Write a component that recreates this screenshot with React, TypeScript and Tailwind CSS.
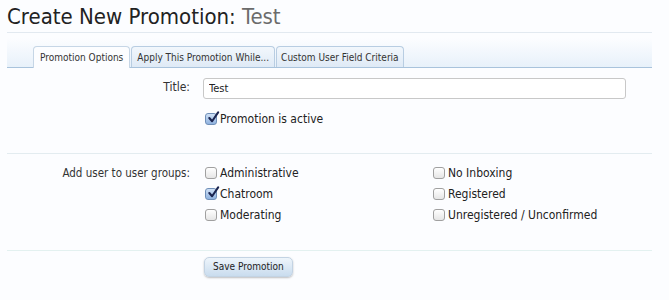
const groupsLeft = [
  { label: 'Administrative', checked: false },
  { label: 'Chatroom', checked: true },
  { label: 'Moderating', checked: false },
]

const groupsRight = [
  { label: 'No Inboxing', checked: false },
  { label: 'Registered', checked: false },
  { label: 'Unregistered / Unconfirmed', checked: false },
]

function Box({ checked }: { checked: boolean }) {
  return (
    <span
      className={
        checked
          ? 'relative inline-flex h-[12px] w-[12px] flex-shrink-0 items-center justify-center rounded-[3px] border border-[#6f8fb8] bg-gradient-to-b from-[#cfe0f5] to-[#8fb2df]'
          : 'relative inline-flex h-[12px] w-[12px] flex-shrink-0 items-center justify-center rounded-[3px] border border-[#a0a0a0] bg-gradient-to-b from-white to-[#e6e6e6]'
      }
    >
      {checked && (
        <svg className="absolute -top-[3px] left-[1px] h-[13px] w-[13px]" viewBox="0 0 14 14" aria-hidden="true">
          <path d="M2.5 7.5l3 3.5L12 1.5" fill="none" stroke="#1a2450" strokeWidth={2.2} strokeLinecap="round" strokeLinejoin="round" />
        </svg>
      )}
    </span>
  )
}

function Check({ label, checked }: { label: string; checked: boolean }) {
  return (
    <label className="flex h-[21px] items-center gap-[3px] text-[12px] text-[#222]">
      <Box checked={checked} />
      <span>{label}</span>
    </label>
  )
}

export default function App() {
  return (
    <div
      className="h-[300px] w-[669px] overflow-hidden bg-[#fcfdff] pl-[7px] pr-[17px]"
      style={{ fontFamily: '"DejaVu Sans Condensed", "DejaVu Sans", sans-serif' }}
    >
      <h1 className="pt-[4px] text-[22px] leading-[25px] text-[#222]">
        Create New Promotion: <span className="text-[#6b6b6b]">Test</span>
      </h1>
      <div className="mt-[3px] border-t border-[#e2e9f0]" />

      <div className="mt-[5px] flex h-[30px] items-end border-b border-[#a9c3dc] bg-gradient-to-b from-[#fcfdff] to-[#e8f1fa] pl-[26px]">
        <div className="-mb-px flex h-[22px] items-center rounded-t-[4px] border border-b-0 border-[#c6d6e6] bg-[#fcfdff] px-[6px] text-[10px] text-[#333]">
          Promotion Options
        </div>
        <div className="ml-px flex h-[21px] items-center rounded-t-[4px] border border-b-0 border-[#b8cde2] bg-gradient-to-b from-[#f2f7fc] to-[#dfeaf6] px-[5px] text-[10px] text-[#333]">
          Apply This Promotion While...
        </div>
        <div className="ml-px flex h-[21px] items-center rounded-t-[4px] border border-b-0 border-[#b8cde2] bg-gradient-to-b from-[#f2f7fc] to-[#dfeaf6] px-[4px] text-[10px] text-[#333]">
          Custom User Field Criteria
        </div>
      </div>

      <div className="grid grid-cols-[183px_1fr] gap-x-[13px] pt-[7px]">
        <div className="pt-[3px] text-right text-[12px] text-[#333]">Title:</div>
        <div className="pr-[26px]">
          <input
            readOnly
            value="Test"
            className="h-[21px] w-full rounded-[3px] border border-[#c8c8c8] bg-white px-[5px] text-[11px] text-[#222] outline-none"
            style={{ fontFamily: 'inherit' }}
          />
        </div>
        <div />
        <div className="pt-[9px] pl-[2px]">
          <Check label="Promotion is active" checked />
        </div>
      </div>

      <div className="mt-[24px] border-t border-[#e3ecf0]" />

      <div className="grid grid-cols-[183px_1fr] gap-x-[13px] pt-[8px]">
        <div className="pt-[3px] text-right text-[11.5px] text-[#333]">Add user to user groups:</div>
        <div className="grid grid-cols-[228px_1fr] pl-[2px]">
          <div>
            {groupsLeft.map((g) => (
              <Check key={g.label} label={g.label} checked={g.checked} />
            ))}
          </div>
          <div>
            {groupsRight.map((g) => (
              <Check key={g.label} label={g.label} checked={g.checked} />
            ))}
          </div>
        </div>
      </div>

      <div className="mt-[25px] border-t border-[#e3f1f0]" />

      <div className="pl-[197px] pt-[2px]">
        <button
          type="button"
          className="h-[20px] rounded-[5px] border border-[#c3d3e3] bg-gradient-to-b from-[#eef5fb] to-[#c9dcee] px-[8px] text-[10px] text-[#222] shadow-[0_1px_2px_rgba(0,0,0,0.25)]"
          style={{ fontFamily: 'inherit' }}
        >
          Save Promotion
        </button>
      </div>
    </div>
  )
}
